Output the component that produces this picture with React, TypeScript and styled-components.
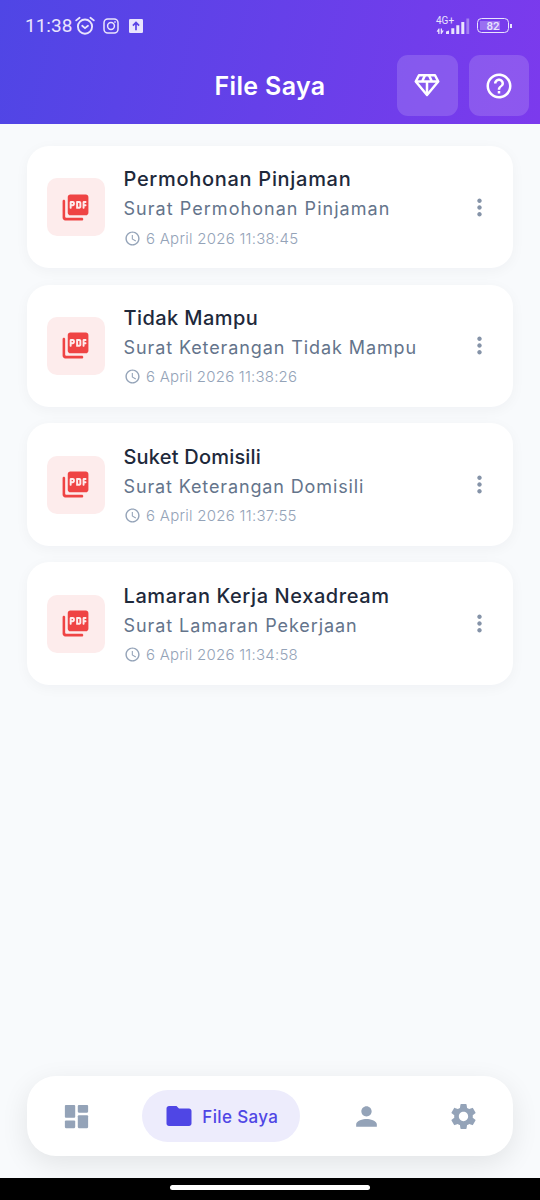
import React from 'react';
import styled, { createGlobalStyle } from 'styled-components';
import {
  MdAccessTime,
  MdFolder,
  MdHelpOutline,
  MdMoreVert,
  MdPerson,
  MdSettings,
} from 'react-icons/md';

const GlobalStyle = createGlobalStyle`
  *, *::before, *::after { box-sizing: border-box; }
  body { margin: 0; background: #f8fafc; }
  button { border: 0; padding: 0; background: none; font: inherit; color: inherit; }
  svg { display: block; flex: none; }
`;

const Screen = styled.div`
  display: flex;
  flex-direction: column;
  width: 540px;
  height: 1200px;
  overflow: hidden;
  background: #f8fafc;
  font-family: Inter, 'Open Sans', sans-serif;
`;

const Header = styled.header`
  flex: none;
  height: 124px;
  background: linear-gradient(103deg, #4f46e5, #7c3aed);
  color: #fff;
`;

const StatusBar = styled.div`
  display: flex;
  align-items: center;
  justify-content: space-between;
  height: 55px;
  padding: 0 28px 4px 25px;
  color: #e9e4fd;
`;

const StatusGroup = styled.div<{ $gap: number }>`
  display: flex;
  align-items: center;
  gap: ${({ $gap }) => $gap}px;
`;

const Clock = styled.span`
  width: 47px;
  padding-top: 1px;
  font: 450 19px/22px Roboto, sans-serif;
  white-space: nowrap;
`;

const StatusIcons = styled.div`
  display: flex;
  align-items: center;
  gap: 8px;
  margin-left: 3px;

  & > :last-child {
    margin-left: 2px;
  }
`;

const AppBar = styled.div`
  display: grid;
  grid-template-columns: 1fr auto 1fr;
  align-items: center;
  height: 61px;
  padding: 0 11px;
`;

const PageTitle = styled.h1`
  grid-column: 2;
  margin: 0;
  font-size: 25px;
  font-weight: 600;
  line-height: 36px;
  letter-spacing: 0.35px;
`;

const Actions = styled.div`
  display: flex;
  justify-content: flex-end;
  gap: 11px;
`;

const ActionButton = styled.button`
  display: grid;
  place-items: center;
  width: 60.5px;
  height: 60.5px;
  border-radius: 11px;
  background: rgba(255, 255, 255, 0.15);
`;

const FileList = styled.main`
  flex: 1;
  display: flex;
  flex-direction: column;
  gap: 16.3px;
  padding: 21.9px 27.5px 0 27px;
`;

const Card = styled.article`
  display: flex;
  align-items: center;
  height: 122.5px;
  padding: 0 19.5px;
  border-radius: 22px;
  background: #fff;
  box-shadow: 0 3px 14px rgba(15, 23, 42, 0.04);
`;

const FileTile = styled.div`
  display: grid;
  place-items: center;
  width: 58px;
  height: 58px;
  border-radius: 10px;
  background: #fdecec;
  color: #ef4444;
`;

const FileInfo = styled.div`
  flex: 1;
  min-width: 0;
  margin-left: 19px;
  padding-top: 3px;
  white-space: nowrap;
`;

const FileName = styled.h2<{ $tracking: number }>`
  margin: 0;
  color: #1e293b;
  font-size: 20px;
  font-weight: 500;
  line-height: 30px;
  letter-spacing: ${({ $tracking }) => $tracking}px;
`;

const FileKind = styled.p<{ $tracking: number }>`
  margin: 0;
  color: #64748b;
  font-size: 18px;
  font-weight: 400;
  line-height: 29px;
  letter-spacing: ${({ $tracking }) => $tracking}px;
`;

const FileDate = styled.div<{ $tracking: number }>`
  display: flex;
  align-items: center;
  gap: 5.5px;
  height: 30px;
  color: #94a3b8;
  font-size: 15px;
  font-weight: 350;
  letter-spacing: ${({ $tracking }) => $tracking}px;
`;

const MenuButton = styled.button`
  display: grid;
  place-items: center;
  width: 27px;
  height: 40px;
  color: #8593a8;
`;

const NavBar = styled.nav`
  flex: none;
  display: flex;
  align-items: center;
  justify-content: space-between;
  height: 80px;
  margin: 0 27.5px 22px 27px;
  padding: 0 33.5px;
  border-radius: 29px;
  background: #fff;
  color: #94a3b8;
  box-shadow: 0 8px 28px rgba(0, 0, 0, 0.09);
`;

const NavItem = styled.button`
  display: flex;
`;

const ActiveNavItem = styled.button`
  display: flex;
  align-items: center;
  gap: 8px;
  width: 158px;
  height: 52px;
  margin: 0 -15px 0 -15px;
  padding-left: 22px;
  border-radius: 26px;
  background: #edecfc;
  color: #4f46e5;
`;

const NavLabel = styled.span`
  font-size: 17px;
  font-weight: 500;
  letter-spacing: 0.35px;
  padding-top: 1px;
  white-space: nowrap;
`;

const SystemBar = styled.footer`
  flex: none;
  display: flex;
  justify-content: center;
  height: 22px;
  padding-top: 7px;
  background: #000;
`;

const HomeHandle = styled.div`
  width: 200px;
  height: 5px;
  border-radius: 3px;
  background: #fff;
`;

const Network = styled.div`
  position: relative;
  width: 34px;
  height: 18px;
`;

const NetworkLabel = styled.span`
  position: absolute;
  top: -1px;
  left: 0;
  font: 400 10px/10px Roboto, sans-serif;
`;

const Battery = styled.div`
  position: relative;
  display: grid;
  place-items: center;
  width: 32px;
  height: 15px;
  margin-right: 3px;
  border: 1.5px solid currentColor;
  border-radius: 4.5px;
  font: 500 11.5px/12px Roboto, sans-serif;
  background: linear-gradient(#9a70f1, #9a70f1) 2px 50% / 20px 9px no-repeat;

  &::after {
    content: '';
    position: absolute;
    right: -4px;
    width: 2px;
    height: 4px;
    background: currentColor;
  }
`;

const AlarmIcon = () => (
  <svg width="20" height="20" viewBox="0 0 20 20" fill="none" stroke="currentColor" strokeLinecap="round">
    <circle cx="10" cy="10.6" r="7.1" strokeWidth="1.9" />
    <path d="M7.2 9.8 10 12.1l3-2.3" strokeWidth="1.8" />
    <path d="M1.2 4.4 4.6 1.7M18.8 4.4l-3.4-2.7" strokeWidth="1.8" />
  </svg>
);

const CameraIcon = () => (
  <svg width="16" height="16" viewBox="0 0 16 16" fill="none" stroke="currentColor" strokeWidth="1.5">
    <rect x="1" y="1" width="14" height="14" rx="3.8" />
    <circle cx="8" cy="8" r="3.4" />
    <circle cx="12" cy="4" r=".5" strokeWidth="1" />
  </svg>
);

const UploadIcon = () => (
  <svg width="14" height="14" viewBox="0 0 14 14">
    <rect width="14" height="14" rx="1.3" fill="currentColor" />
    <path d="M7 11.2V4M3.9 6.7 7 3.5l3.1 3.2" fill="none" stroke="#5a43e6" strokeWidth="1.7" />
  </svg>
);

const SignalIcon = () => (
  <svg width="34" height="18" viewBox="0 0 34 18" fill="currentColor">
    <path d="M.8 14.2 2.6 11.4h.9V17H2.2v-2.2H.8zM4.7 11.4H6v2.2h1.8L5.6 17h-.9z" />
    <path d="M10 14.4 13 13.4V17h-3zM15.3 11.2h3V17h-3zM20.3 8.3h3V17h-3zM25.3 5h3V17h-3z" />
    <path d="M30.4 1.5h2.8V17h-2.8z" opacity=".4" />
  </svg>
);

const DiamondIcon = () => (
  <svg
    width="30"
    height="30"
    viewBox="0 0 24 24"
    fill="none"
    stroke="currentColor"
    strokeWidth="2"
    strokeLinejoin="round"
  >
    <path d="M5.6 3.4h12.8L21 8.4 12 19.2 3 8.4z" />
    <path d="M3 8.4h18M12 8.4v10.4M10.4 3.4 8.1 8.4M13.6 3.4l2.3 5" />
  </svg>
);

const PdfIcon = () => (
  <svg width="31" height="31" viewBox="0 0 24 24" fill="currentColor">
    <path d="M20 2H8c-1.1 0-2 .9-2 2v12c0 1.1.9 2 2 2h12c1.1 0 2-.9 2-2V4c0-1.1-.9-2-2-2zm-8.5 7.5c0 .83-.67 1.5-1.5 1.5H9v1.25c0 .41-.34.75-.75.75s-.75-.34-.75-.75V8c0-.55.45-1 1-1H10c.83 0 1.5.67 1.5 1.5v1zm5 2c0 .83-.67 1.5-1.5 1.5h-2c-.28 0-.5-.22-.5-.5v-5c0-.28.22-.5.5-.5h2c.83 0 1.5.67 1.5 1.5v3zm4-3.75c0 .41-.34.75-.75.75H19v1h.75c.41 0 .75.34.75.75s-.34.75-.75.75H19v1.25c0 .41-.34.75-.75.75s-.75-.34-.75-.75V8c0-.55.45-1 1-1h1.25c.41 0 .75.34.75.75zM9 9.5h1v-1H9v1zM3 6c-.55 0-1 .45-1 1v13c0 1.1.9 2 2 2h13c.55 0 1-.45 1-1s-.45-1-1-1H5c-.55 0-1-.45-1-1V7c0-.55-.45-1-1-1zm11 5.5h1v-3h-1v3z" />
  </svg>
);

const DashboardIcon = () => (
  <svg width="31" height="31" viewBox="0 0 24 24" fill="currentColor">
    <rect x="3" y="3" width="8" height="10" rx=".8" />
    <rect x="3" y="15" width="8" height="6" rx=".8" />
    <rect x="13" y="3" width="8" height="6" rx=".8" />
    <rect x="13" y="11" width="8" height="10" rx=".8" />
  </svg>
);

const files = [
  { name: 'Permohonan Pinjaman', kind: 'Surat Permohonan Pinjaman', date: '6 April 2026 11:38:45', tracking: [0.7, 1.04, 0.26] },
  { name: 'Tidak Mampu', kind: 'Surat Keterangan Tidak Mampu', date: '6 April 2026 11:38:26', tracking: [0.42, 0.9, 0.21] },
  { name: 'Suket Domisili', kind: 'Surat Keterangan Domisili', date: '6 April 2026 11:37:55', tracking: [0.2, 0.87, 0.27] },
  { name: 'Lamaran Kerja Nexadream', kind: 'Surat Lamaran Pekerjaan', date: '6 April 2026 11:34:58', tracking: [0.6, 0.92, 0.24] },
];

export default function App() {
  return (
    <Screen>
      <GlobalStyle />
      <Header>
        <StatusBar>
          <StatusGroup $gap={0}>
            <Clock>11:38</Clock>
            <StatusIcons>
              <AlarmIcon />
              <CameraIcon />
              <UploadIcon />
            </StatusIcons>
          </StatusGroup>
          <StatusGroup $gap={7}>
            <Network>
              <NetworkLabel>4G+</NetworkLabel>
              <SignalIcon />
            </Network>
            <Battery>82</Battery>
          </StatusGroup>
        </StatusBar>
        <AppBar>
          <span />
          <PageTitle>File Saya</PageTitle>
          <Actions>
            <ActionButton aria-label="Premium"><DiamondIcon /></ActionButton>
            <ActionButton aria-label="Bantuan"><MdHelpOutline size={30} /></ActionButton>
          </Actions>
        </AppBar>
      </Header>
      <FileList>
        {files.map((file) => (
          <Card key={file.name}>
            <FileTile><PdfIcon /></FileTile>
            <FileInfo>
              <FileName $tracking={file.tracking[0]}>{file.name}</FileName>
              <FileKind $tracking={file.tracking[1]}>{file.kind}</FileKind>
              <FileDate $tracking={file.tracking[2]}>
                <MdAccessTime size={17} />
                {file.date}
              </FileDate>
            </FileInfo>
            <MenuButton aria-label="Menu"><MdMoreVert size={27} /></MenuButton>
          </Card>
        ))}
      </FileList>
      <NavBar>
        <NavItem aria-label="Beranda"><DashboardIcon /></NavItem>
        <ActiveNavItem>
          <MdFolder size={30} />
          <NavLabel>File Saya</NavLabel>
        </ActiveNavItem>
        <NavItem aria-label="Profil"><MdPerson size={31} /></NavItem>
        <NavItem aria-label="Pengaturan"><MdSettings size={31} /></NavItem>
      </NavBar>
      <SystemBar><HomeHandle /></SystemBar>
    </Screen>
  );
}
